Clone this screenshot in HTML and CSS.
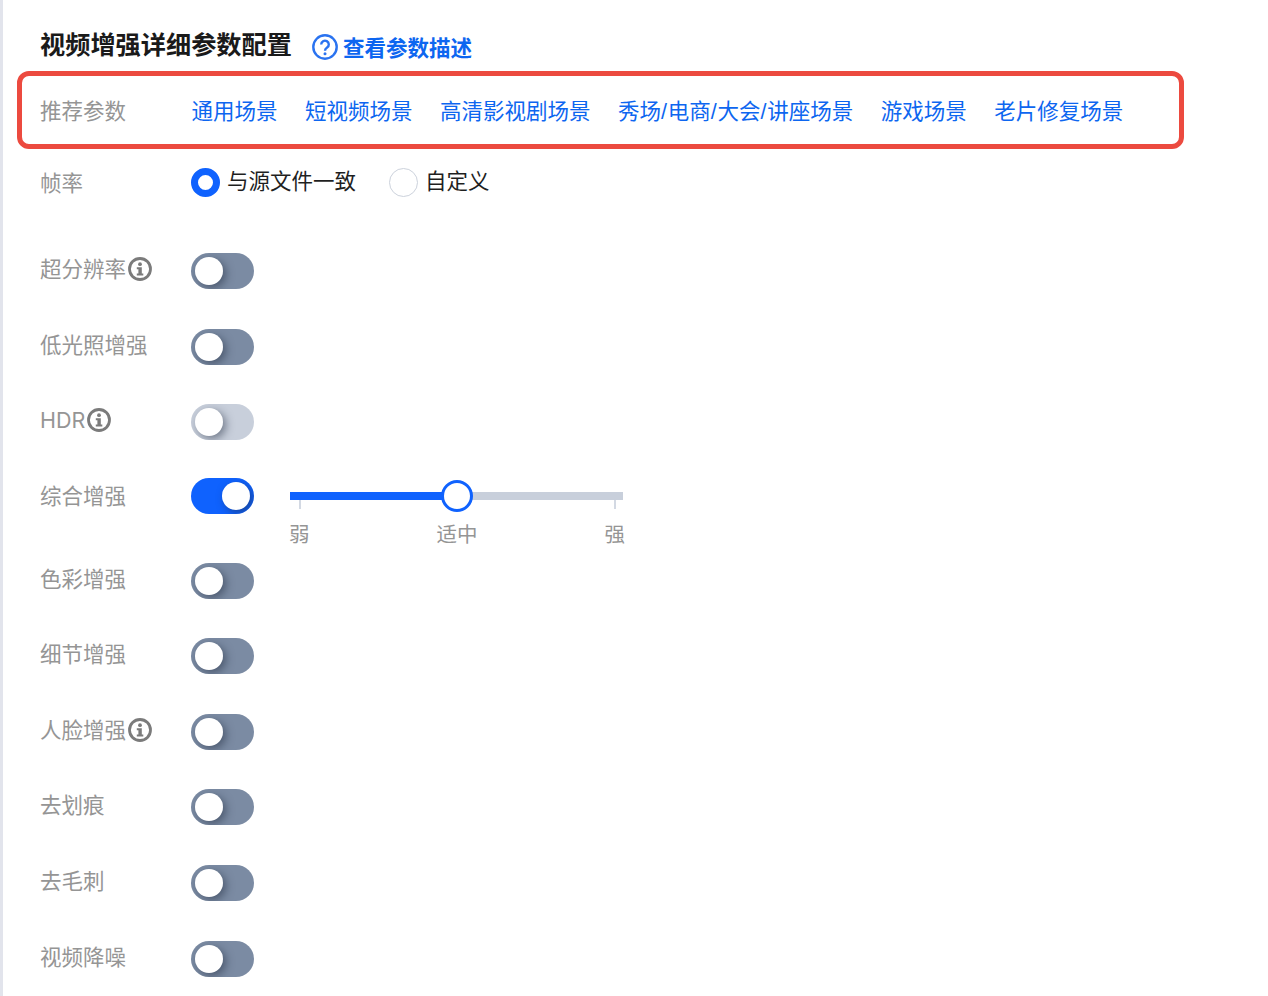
FILE: index.html
```html
<!DOCTYPE html>
<html lang="zh-CN">
<head>
    <meta charset="UTF-8">
    <title>视频增强详细参数配置</title>
    <link rel="stylesheet" href="styles.css">
</head>
<body>
    <main class="panel">
        <div class="title-row">
            <h2>视频增强详细参数配置</h2>
            <a class="help-link" href="#">
                <svg class="help-icon" viewBox="0 0 26 26" width="26" height="26">
                    <circle cx="13" cy="13" r="11.7" fill="none" stroke="#2a73f0" stroke-width="2.4"/>
                    <path d="M9.2 10.4a3.8 3.8 0 1 1 5.9 3.2c-1.4.9-2.1 1.5-2.1 3.2" fill="none" stroke="#2a73f0" stroke-width="2.4"/>
                    <circle cx="13" cy="19.8" r="1.5" fill="#2a73f0"/>
                </svg>
                <span>查看参数描述</span>
            </a>
        </div>

        <div class="preset-box">
            <span class="label">推荐参数</span>
            <div class="preset-links">
                <a href="#">通用场景</a>
                <a href="#">短视频场景</a>
                <a href="#">高清影视剧场景</a>
                <a href="#">秀场<span class="slash">/</span>电商<span class="slash">/</span>大会<span class="slash">/</span>讲座场景</a>
                <a href="#">游戏场景</a>
                <a href="#">老片修复场景</a>
            </div>
        </div>

        <div class="row row-radio">
            <span class="label">帧率</span>
            <label class="radio"><i class="dot dot-on"></i><span>与源文件一致</span></label>
            <label class="radio"><i class="dot"></i><span>自定义</span></label>
        </div>

        <div class="row">
            <span class="label">超分辨率<svg class="info" viewBox="0 0 24 24" width="24" height="24"><use href="#info"/></svg></span>
            <span class="toggle"></span>
        </div>
        <div class="row">
            <span class="label">低光照增强</span>
            <span class="toggle"></span>
        </div>
        <div class="row">
            <span class="label">HDR<svg class="info" viewBox="0 0 24 24" width="24" height="24"><use href="#info"/></svg></span>
            <span class="toggle toggle-disabled"></span>
        </div>
        <div class="row row-slider">
            <span class="label">综合增强</span>
            <span class="toggle toggle-on"></span>
            <div class="slider">
                <div class="track"><div class="track-fill"></div><span class="thumb"></span></div>
                <div class="ticks"><i></i><i></i></div>
                <div class="marks"><span>弱</span><span>适中</span><span>强</span></div>
            </div>
        </div>
        <div class="row">
            <span class="label">色彩增强</span>
            <span class="toggle"></span>
        </div>
        <div class="row">
            <span class="label">细节增强</span>
            <span class="toggle"></span>
        </div>
        <div class="row">
            <span class="label">人脸增强<svg class="info" viewBox="0 0 24 24" width="24" height="24"><use href="#info"/></svg></span>
            <span class="toggle"></span>
        </div>
        <div class="row">
            <span class="label">去划痕</span>
            <span class="toggle"></span>
        </div>
        <div class="row">
            <span class="label">去毛刺</span>
            <span class="toggle"></span>
        </div>
        <div class="row">
            <span class="label">视频降噪</span>
            <span class="toggle"></span>
        </div>
    </main>

    <svg class="defs" width="0" height="0">
        <symbol id="info" viewBox="0 0 24 24">
            <circle cx="12" cy="12" r="10.5" fill="none" stroke="#7b7b7b" stroke-width="2.8"/>
            <circle cx="12" cy="7.2" r="1.9" fill="#7b7b7b"/>
            <path d="M8.8 10.2h5v6.4h1.5v2H8.8v-2h1.6v-4.4H8.8z" fill="#7b7b7b"/>
        </symbol>
    </svg>
</body>
</html>
```

FILE: styles.css
```css
:root {
    --color-blue: #0f62fe;
    --color-link: #0d66f0;
    --color-label: #959595;
    --color-red: #ec4a3f;
}
html, body { height: 100%; overflow: hidden; }
body { margin: 0; background-color: #fff; border-left: 3px solid #e2e4ec; font-family: Inter, "Noto Sans CJK SC", sans-serif; font-size: 21.5px; color: #1f1f1f; }
a { text-decoration: none; }
.defs { position: absolute; }

.panel { padding: 28px 0 0 37px; }

/* titulo */
.title-row { display: flex; align-items: center; height: 38px; }
.title-row h2 { margin: 0 0 8px; font-size: 25.2px; font-weight: 700; color: #1a1a1a; }
.help-link { display: flex; align-items: center; margin-left: 20px; font-size: 21.5px; font-weight: 600; color: var(--color-link); }
.help-link span { padding-bottom: 1px; }
.help-icon { margin-right: 5px; }

/* recuadro rojo */
.preset-box { display: flex; align-items: center; box-sizing: border-box; width: 1167px; height: 78px; margin: 5px 0 0 -23px; padding-left: 18px; border: 5px solid var(--color-red); border-radius: 12px; }
.preset-box .label { width: 151.5px; padding: 2px 0 0; }
.preset-links { display: flex; gap: 27.5px; padding-bottom: 2px; }
.preset-links a { color: var(--color-link); }
.slash { font-family: "Liberation Sans", sans-serif; letter-spacing: 0.7px; }

.label { display: flex; align-items: center; flex: none; width: 151px; padding-bottom: 4px; color: var(--color-label); line-height: 36px; }
.info { margin-left: 2px; }

.row { display: flex; align-items: center; height: 36px; margin-bottom: 39.6px; }
.row-radio { margin: 15px 0 53px; }
.row-radio .label { padding: 2px 0 0; }
.row-slider { align-items: flex-start; margin-top: -1.8px; margin-bottom: 48.6px; }

.radio { display: flex; align-items: center; margin-right: 33px; color: #1f1f1f; }
.radio span { padding-bottom: 6px; }
.dot { box-sizing: border-box; width: 29px; height: 29px; margin-right: 7px; border: 1px solid #ccd2dc; border-radius: 50%; background-color: #fff; }
.dot-on { border: 7px solid var(--color-blue); }

.toggle { position: relative; flex: none; width: 63px; height: 36px; border-radius: 18px; background-color: #7b8ba3; overflow: hidden; }
.toggle::after { content: ""; position: absolute; top: 4px; left: 4px; width: 28px; height: 28px; border-radius: 50%; background-color: #fff; box-shadow: 3px 3px 9px rgba(30, 40, 60, 0.5); }
.toggle-disabled { background-color: #c8cfdb; }
.toggle-on { background-color: var(--color-blue); }
.toggle-on::after { left: 31px; }

.slider { position: relative; width: 333px; margin: 14px 0 0 36px; }
.track { position: relative; height: 8px; background-color: #c8cfdb; }
.track-fill { width: 50%; height: 100%; background-color: var(--color-blue); }
.thumb { position: absolute; top: -12px; left: 150.5px; box-sizing: border-box; width: 32px; height: 32px; border: 3px solid var(--color-blue); border-radius: 50%; background-color: #fff; }
.ticks { display: flex; justify-content: space-between; padding: 0 7px 0 9px; }
.ticks i { width: 2px; height: 9px; background-color: #d3d9e3; }
.marks { display: flex; justify-content: space-between; margin: 10px -2px 0 -1px; font-size: 20.5px; line-height: 32px; color: var(--color-label); }
```
